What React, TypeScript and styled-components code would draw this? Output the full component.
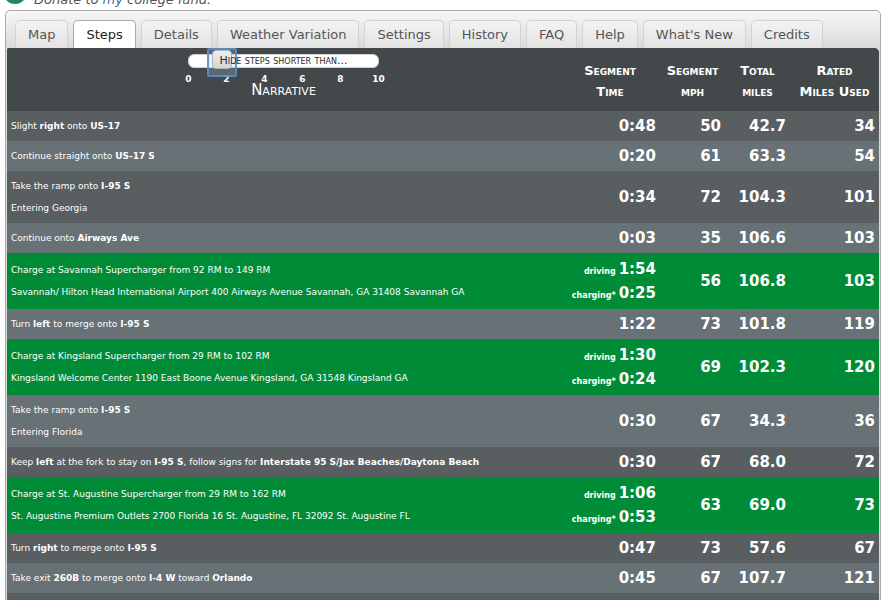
import React from "react";
import styled, { createGlobalStyle } from "styled-components";

const GlobalStyle = createGlobalStyle`
  body {
    margin: 0;
    background: #fff;
    font-family: "DejaVu Sans", Verdana, sans-serif;
    overflow: hidden;
  }
`;

const Donate = styled.div`
  display: flex;
  align-items: center;
  gap: 7px;
  height: 22px;
  margin-top: -12px;
  padding-left: 3px;
  font-size: 13px;
  font-style: italic;
  color: #555;

  span {
    color: #3a6fb0;
  }
  svg {
    overflow: visible;
  }
`;

const Frame = styled.div`
  margin-left: 5px;
  border: 1px solid #aaa;
  border-radius: 5px;
  padding: 9px 1px 0 1px;
  background: linear-gradient(#f7f7f7, #d9d9d9 38px, #d9d9d9);
`;

const TabList = styled.div`
  display: flex;
  gap: 5px;
  padding-left: 8px;
  height: 28px;
`;

const Tab = styled.div<{ $active?: boolean }>`
  padding: 0 12px;
  border: 1px solid ${(p) => (p.$active ? "#aaa" : "#d3d3d3")};
  border-bottom: none;
  border-radius: 5px 5px 0 0;
  background: ${(p) =>
    p.$active ? "#fff" : "linear-gradient(#f3f3f3, #e3e3e3)"};
  color: ${(p) => (p.$active ? "#222" : "#555")};
  font-size: 13px;
  line-height: 27px;
`;

const Panel = styled.div`
  background: #43484b;
  border-radius: 2px 5px 0 0;
  overflow: hidden;
`;

const Row = styled.div<{ $tone: "head" | "dark" | "light" | "green" }>`
  display: grid;
  grid-template-columns: 1fr 100px 65px 65px 89px;
  color: #fff;
  background: ${(p) =>
    p.$tone === "green"
      ? "#008c36"
      : p.$tone === "light"
      ? "#687175"
      : p.$tone === "dark"
      ? "#595e61"
      : "#43484b"};
`;

const NarrHead = styled.div`
  display: flex;
  flex-direction: column;
  align-items: center;
  padding-top: 6px;
`;

const Track = styled.div`
  position: relative;
  width: 189px;
  height: 12px;
  border: 1px solid #cfcfcf;
  border-radius: 6px;
  background: #fff;
  color: #2a2a2a;
  font-size: 11px;
  font-variant: small-caps;
  line-height: 12px;
  text-align: center;
`;

const Handle = styled.div`
  position: absolute;
  left: 23px;
  top: -5px;
  width: 18px;
  height: 17px;
  border: 1px solid #b5b5b5;
  border-radius: 4px;
  background: linear-gradient(#eeeeee, #d6d6d6);
`;

const FocusRing = styled.div`
  position: absolute;
  left: 18px;
  top: -7px;
  width: 26px;
  height: 25px;
  border: 2px solid rgba(90, 140, 195, 0.9);
  border-radius: 2px;
  background: rgba(160, 200, 235, 0.25);
`;

const TrackLabel = styled.span`
  position: relative;
`;

const Ticks = styled.div`
  display: grid;
  grid-template-columns: repeat(6, 38px);
  margin-top: 7px;
  font-size: 9px;
  font-weight: bold;
  line-height: 9px;
  text-align: center;
`;

const NarrTitle = styled.div`
  font-size: 15px;
  font-variant: small-caps;
  line-height: 12px;
`;

const ColHead = styled.div`
  padding: 12px 0 9px;
  text-align: center;
  font-size: 13px;
  font-weight: bold;
  font-variant: small-caps;
  line-height: 21px;
`;

const Narr = styled.div`
  align-self: center;
  padding: 4px;
  font-size: 9px;
  line-height: 22px;
  white-space: nowrap;
`;

const Num = styled.div`
  align-self: center;
  padding: 4px;
  text-align: right;
  font-size: 15px;
  font-weight: bold;
  line-height: 22px;
`;

const TimeLine = styled.div`
  display: flex;
  justify-content: flex-end;
  align-items: baseline;
  height: 24px;
  line-height: 24px;

  small {
    font-size: 8px;
    line-height: 10px;
    margin-right: 3px;
  }
`;

type Step = {
  lines: React.ReactNode[];
  time: string | [string, string];
  mph: string;
  total: string;
  rated: string;
};

const steps: Step[] = [
  { lines: [<>Slight <b>right</b> onto <b>US-17</b></>], time: "0:48", mph: "50", total: "42.7", rated: "34" },
  { lines: [<>Continue straight onto <b>US-17 S</b></>], time: "0:20", mph: "61", total: "63.3", rated: "54" },
  { lines: [<>Take the ramp onto <b>I-95 S</b></>, "Entering Georgia"], time: "0:34", mph: "72", total: "104.3", rated: "101" },
  { lines: [<>Continue onto <b>Airways Ave</b></>], time: "0:03", mph: "35", total: "106.6", rated: "103" },
  {
    lines: [
      "Charge at Savannah Supercharger from 92 RM to 149 RM",
      "Savannah/ Hilton Head International Airport 400 Airways Avenue Savannah, GA 31408 Savannah GA",
    ],
    time: ["1:54", "0:25"], mph: "56", total: "106.8", rated: "103",
  },
  { lines: [<>Turn <b>left</b> to merge onto <b>I-95 S</b></>], time: "1:22", mph: "73", total: "101.8", rated: "119" },
  {
    lines: [
      "Charge at Kingsland Supercharger from 29 RM to 102 RM",
      "Kingsland Welcome Center 1190 East Boone Avenue Kingsland, GA 31548 Kingsland GA",
    ],
    time: ["1:30", "0:24"], mph: "69", total: "102.3", rated: "120",
  },
  { lines: [<>Take the ramp onto <b>I-95 S</b></>, "Entering Florida"], time: "0:30", mph: "67", total: "34.3", rated: "36" },
  {
    lines: [
      <>Keep <b>left</b> at the fork to stay on <b>I-95 S</b>, follow signs for <b>Interstate 95 S/Jax Beaches/Daytona Beach</b></>,
    ],
    time: "0:30", mph: "67", total: "68.0", rated: "72",
  },
  {
    lines: [
      "Charge at St. Augustine Supercharger from 29 RM to 162 RM",
      "St. Augustine Premium Outlets 2700 Florida 16 St. Augustine, FL 32092 St. Augustine FL",
    ],
    time: ["1:06", "0:53"], mph: "63", total: "69.0", rated: "73",
  },
  { lines: [<>Turn <b>right</b> to merge onto <b>I-95 S</b></>], time: "0:47", mph: "73", total: "57.6", rated: "67" },
  { lines: [<>Take exit <b>260B</b> to merge onto <b>I-4 W</b> toward <b>Orlando</b></>], time: "0:45", mph: "67", total: "107.7", rated: "121" },
  { lines: [<>Keep <b>left</b> at the fork to continue on <b>I-4 W</b></>], time: "0:52", mph: "64", total: "52.1", rated: "58" },
];

const tabs = ["Map", "Steps", "Details", "Weather Variation", "Settings", "History", "FAQ", "Help", "What's New", "Credits"];

export default function App() {
  return (
    <>
      <GlobalStyle />
      <Donate>
        <svg width="24" height="22" viewBox="0 0 24 22">
          <circle cx="12" cy="4" r="10" fill="#fff" stroke="#1f8a57" strokeWidth="4" />
        </svg>
        <div>
          Donate to <span>my</span> college fund.
        </div>
      </Donate>
      <Frame>
        <TabList>
          {tabs.map((t) => (
            <Tab key={t} $active={t === "Steps"}>
              {t}
            </Tab>
          ))}
        </TabList>
        <Panel>
          <Row $tone="head">
            <NarrHead>
              <Track>
                <FocusRing />
                <Handle />
                <TrackLabel>Hide steps shorter than...</TrackLabel>
              </Track>
              <Ticks>
                {["0", "2", "4", "6", "8", "10"].map((n) => (
                  <span key={n}>{n}</span>
                ))}
              </Ticks>
              <NarrTitle>Narrative</NarrTitle>
            </NarrHead>
            <ColHead>
              Segment
              <br />
              Time
            </ColHead>
            <ColHead>
              Segment
              <br />
              mph
            </ColHead>
            <ColHead>
              Total
              <br />
              miles
            </ColHead>
            <ColHead>
              Rated
              <br />
              Miles Used
            </ColHead>
          </Row>
          {steps.map((s, i) => {
            const charge = Array.isArray(s.time);
            const tone = charge ? "green" : i % 2 === 1 ? "light" : "dark";
            return (
              <Row key={i} $tone={tone}>
                <Narr>
                  {s.lines.map((l, j) => (
                    <div key={j}>{l}</div>
                  ))}
                </Narr>
                <Num>
                  {Array.isArray(s.time) ? (
                    <>
                      <TimeLine>
                        <small>driving</small>
                        {s.time[0]}
                      </TimeLine>
                      <TimeLine>
                        <small>charging*</small>
                        {s.time[1]}
                      </TimeLine>
                    </>
                  ) : (
                    s.time
                  )}
                </Num>
                <Num>{s.mph}</Num>
                <Num>{s.total}</Num>
                <Num>{s.rated}</Num>
              </Row>
            );
          })}
        </Panel>
      </Frame>
    </>
  );
}
